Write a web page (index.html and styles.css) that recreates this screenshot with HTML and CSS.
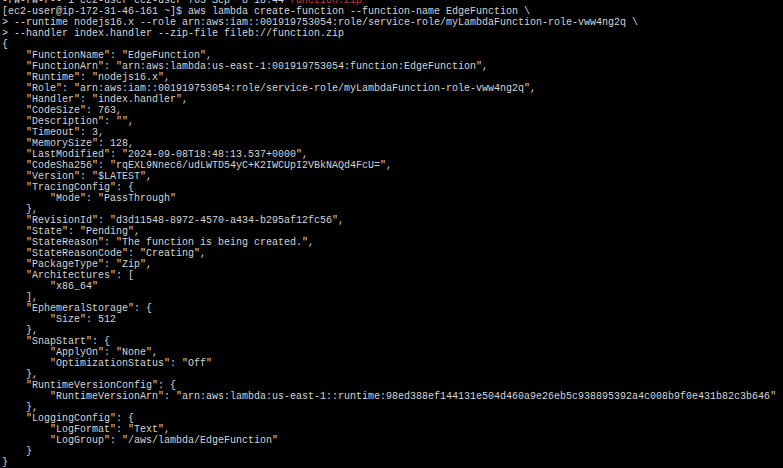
FILE: index.html
```html
<!DOCTYPE html>
<html>
<head>
<meta charset="utf-8">
<link rel="stylesheet" href="styles.css">
</head>
<body>
<div class="term">
<pre class="out">-rw-rw-r-- 1 ec2-user ec2-user 763 Sep  8 18:44 <span class="red">function.zip</span>
[ec2-user@ip-172-31-46-161 ~]$ aws lambda create-function --function-name EdgeFunction \
&gt; --runtime nodejs16.x --role arn:aws:iam::001919753054:role/service-role/myLambdaFunction-role-vww4ng2q \
&gt; --handler index.handler --zip-file fileb://function.zip
{
    "FunctionName": "EdgeFunction",
    "FunctionArn": "arn:aws:lambda:us-east-1:001919753054:function:EdgeFunction",
    "Runtime": "nodejs16.x",
    "Role": "arn:aws:iam::001919753054:role/service-role/myLambdaFunction-role-vww4ng2q",
    "Handler": "index.handler",
    "CodeSize": 763,
    "Description": "",
    "Timeout": 3,
    "MemorySize": 128,
    "LastModified": "2024-09-08T18:48:13.537+0000",
    "CodeSha256": "rqEXL9Nnec6/udLWTD54yC+K2IWCUpI2VBkNAQd4FcU=",
    "Version": "$LATEST",
    "TracingConfig": {
        "Mode": "PassThrough"
    },
    "RevisionId": "d3d11548-8972-4570-a434-b295af12fc56",
    "State": "Pending",
    "StateReason": "The function is being created.",
    "StateReasonCode": "Creating",
    "PackageType": "Zip",
    "Architectures": [
        "x86_64"
    ],
    "EphemeralStorage": {
        "Size": 512
    },
    "SnapStart": {
        "ApplyOn": "None",
        "OptimizationStatus": "Off"
    },
    "RuntimeVersionConfig": {
        "RuntimeVersionArn": "arn:aws:lambda:us-east-1::runtime:98ed388ef144131e504d460a9e26eb5c938895392a4c008b9f0e431b82c3b646"
    },
    "LoggingConfig": {
        "LogFormat": "Text",
        "LogGroup": "/aws/lambda/EdgeFunction"
    }
}</pre>
</div>
</body>
</html>
```

FILE: styles.css
```css
html, body {
  margin: 0;
  padding: 0;
  background: #000;
  width: 783px;
  height: 468px;
  overflow: hidden;
}
.term {
  width: 783px;
  height: 468px;
  overflow: hidden;
  background: #000;
}
.out {
  margin: -5px 0 0 2px;
  font-family: "Liberation Mono", "DejaVu Sans Mono", monospace;
  font-size: 10px;
  line-height: 11px;
  color: #d4d4d4;
  white-space: pre;
}
.red {
  color: #d23a2e;
}
```
